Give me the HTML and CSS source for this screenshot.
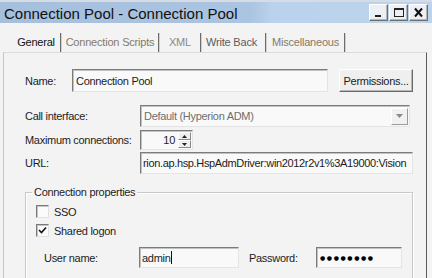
FILE: index.html
```html
<!DOCTYPE html>
<html lang="en">
<head>
    <meta charset="UTF-8">
    <title>Connection Pool - Connection Pool</title>
    <link rel="stylesheet" href="styles.css">
</head>
<body>
    <div class="window">
        <div class="titlebar">
            <span class="title">Connection Pool - Connection Pool</span>
            <div class="controls">
                <span class="ctl">
                    <svg width="13" height="11" viewBox="0 0 13 11"><rect x="3" y="8" width="6" height="2" fill="#222"/></svg>
                </span>
                <span class="ctl">
                    <svg width="13" height="11" viewBox="0 0 13 11"><rect x="2.5" y="1.5" width="9" height="8" fill="none" stroke="#222" stroke-width="1"/><rect x="2" y="1" width="10" height="2" fill="#222"/></svg>
                </span>
                <span class="ctl">
                    <svg width="13" height="11" viewBox="0 0 13 11"><path d="M3 1.5 L10 9.5 M10 1.5 L3 9.5" stroke="#111" stroke-width="2"/></svg>
                </span>
            </div>
        </div>

        <div class="tabs">
            <span class="tab tab-active tab-general">General</span>
            <span class="tab tab-scripts">Connection Scripts</span>
            <span class="tab tab-xml">XML</span>
            <span class="tab tab-writeback">Write Back</span>
            <span class="tab tab-misc">Miscellaneous</span>
        </div>

        <div class="panel">
            <div class="row row-name">
                <span class="lbl lbl-name">Name:</span>
                <div class="field field-name">Connection Pool</div>
                <div class="btn">Permissions...</div>
            </div>

            <div class="row row-call">
                <span class="lbl">Call interface:</span>
                <div class="field field-select">
                    <span class="select-text">Default (Hyperion ADM)</span>
                    <span class="select-arrow">
                        <svg width="7" height="4" viewBox="0 0 7 4"><path d="M0 0 H7 L3.5 4 Z" fill="#8a8a8a"/></svg>
                    </span>
                </div>
            </div>

            <div class="row row-max">
                <span class="lbl">Maximum connections:</span>
                <div class="field field-spin">
                    <span class="spin-value">10</span>
                    <span class="spin-btns">
                        <span class="spin-btn"><svg width="5" height="3" viewBox="0 0 5 3"><path d="M0 3 H5 L2.5 0 Z" fill="#222"/></svg></span>
                        <span class="spin-btn"><svg width="5" height="3" viewBox="0 0 5 3"><path d="M0 0 H5 L2.5 3 Z" fill="#222"/></svg></span>
                    </span>
                </div>
            </div>

            <div class="row row-url">
                <span class="lbl">URL:</span>
                <div class="field field-url">rion.ap.hsp.HspAdmDriver:win2012r2v1%3A19000:Vision</div>
            </div>

            <fieldset class="group">
                <legend>Connection properties</legend>
                <div class="check-row check-sso">
                    <span class="checkbox"></span>
                    <span>SSO</span>
                </div>
                <div class="check-row check-shared">
                    <span class="checkbox">
                        <svg width="9" height="9" viewBox="0 0 9 9"><path d="M1 4 L3.5 6.5 L8 1.5" fill="none" stroke="#111" stroke-width="1.6"/></svg>
                    </span>
                    <span>Shared logon</span>
                </div>
                <div class="row row-login">
                    <span class="lbl lbl-user">User name:</span>
                    <div class="field field-user">admin<span class="caret"></span></div>
                    <span class="lbl lbl-pass">Password:</span>
                    <div class="field field-pass">●●●●●●●●</div>
                </div>
            </fieldset>
        </div>
    </div>
</body>
</html>
```

FILE: styles.css
```css
* {
    margin: 0;
    padding: 0;
    box-sizing: border-box;
}

body {
    width: 432px;
    height: 278px;
    overflow: hidden;
    background: #f3f3f3;
    font-family: "Liberation Sans", Arial, sans-serif;
    font-size: 11px;
    letter-spacing: -0.3px;
    color: #1c1c1c;
}

.window {
    height: 278px;
    display: flex;
    flex-direction: column;
}

/* title bar */
.titlebar {
    height: 23px;
    flex: none;
    border-top: 2px solid #d6dce4;
    background: linear-gradient(90deg, #a5bfdd 0%, #abc4e1 58%, #bad2eb 63%, #bcd3ec 100%);
    display: flex;
    align-items: center;
    justify-content: space-between;
    padding: 0 4px;
}

.title {
    font-size: 15px;
    letter-spacing: 0;
    color: #111;
    margin-top: 1px;
}

.controls {
    display: flex;
    gap: 1px;
}

.ctl {
    width: 19px;
    height: 17px;
    display: flex;
    align-items: center;
    justify-content: center;
    background: #eceff3;
    border: 1px solid;
    border-color: #ffffff #6f6f6f #6f6f6f #ffffff;
    box-shadow: inset -1px -1px 0 #b5b5b5;
}

/* tabs */
.tabs {
    height: 29px;
    flex: none;
    display: flex;
    align-items: flex-end;
    padding-left: 12px;
}

.tab {
    height: 19px;
    line-height: 19px;
    text-align: center;
    color: #857a66;
    letter-spacing: -0.2px;
    border-right: 1px solid #6d6d6d;
    box-shadow: 1px 0 0 #d0d0d0;
    margin-right: 1px;
}

.tab-active { color: #111; }
.tab-general { width: 49px; }
.tab-scripts { width: 97px; }
.tab-xml { width: 41px; color: #8a8a8a; }
.tab-writeback { width: 64px; color: #5c5c5c; padding-right: 4px; }
.tab-misc { width: 78px; }

/* page */
.panel {
    flex: 1;
    margin-left: 3px;
    width: 424px;
    border-top: 1px solid #dcdcdc;
    border-left: 1px solid #c6c6c6;
    border-right: 1px solid #5a5a5a;
    padding-left: 21px;
    padding-top: 16px;
    overflow: hidden;
}

.row {
    display: flex;
    align-items: center;
}

.lbl {
    width: 115px;
    flex: none;
}

.lbl-name { width: 47px; }

.field {
    height: 22px;
    background: #f9f9f9;
    border: 1px solid;
    border-color: #7c7c7c #e4e4e4 #e4e4e4 #7c7c7c;
    box-shadow: inset 1px 1px 0 #c2c2c2;
    display: flex;
    align-items: center;
    padding-left: 3px;
    white-space: nowrap;
    overflow: hidden;
}

.field-name {
    width: 256px;
    height: 23px;
}

.btn {
    margin-left: 11px;
    width: 74px;
    height: 23px;
    display: flex;
    align-items: center;
    justify-content: center;
    background: #efefef;
    border: 1px solid;
    border-color: #ffffff #6a6a6a #6a6a6a #ffffff;
    box-shadow: inset -1px -1px 0 #b8b8b8;
}

.row-call { margin-top: 13px; }

.field-select {
    width: 270px;
    justify-content: space-between;
    color: #6e6e6e;
    padding-right: 1px;
}

.select-arrow {
    width: 17px;
    height: 17px;
    display: flex;
    align-items: center;
    justify-content: center;
    background: #f1f1f1;
    border: 1px solid;
    border-color: #ffffff #9a9a9a #9a9a9a #ffffff;
}

.row-max { margin-top: 3px; }

.field-spin {
    width: 53px;
    height: 20px;
    justify-content: flex-end;
    padding-right: 1px;
}

.spin-value { margin-right: 3px; }

.spin-btns {
    display: flex;
    flex-direction: column;
    width: 13px;
    height: 16px;
}

.spin-btn {
    flex: 1;
    display: flex;
    align-items: center;
    justify-content: center;
    background: #eeeeee;
    border: 1px solid;
    border-color: #ffffff #8a8a8a #8a8a8a #ffffff;
}

.row-url { margin-top: 2px; }

.field-url {
    width: 273px;
    padding-left: 2px;
    letter-spacing: -0.35px;
}

/* group box */
.group {
    margin-top: 12px;
    width: 386px;
    height: 120px;
    border: 1px solid #c9c9c9;
    box-shadow: inset 1px 1px 0 #ffffff, 1px 1px 0 #ffffff;
    padding: 0 10px;
}

.group legend {
    padding: 0 2px;
    margin-left: -4px;
    line-height: 13px;
}

.check-row {
    display: flex;
    align-items: center;
    gap: 5px;
    height: 13px;
}

.check-sso { margin-top: 6px; }
.check-shared { margin-top: 6px; }

.checkbox {
    width: 13px;
    height: 13px;
    display: flex;
    align-items: center;
    justify-content: center;
    background: #fbfbfb;
    border: 1px solid;
    border-color: #7a7a7a #e2e2e2 #e2e2e2 #7a7a7a;
    box-shadow: inset 1px 1px 0 #c4c4c4;
}

.row-login {
    margin-top: 10px;
    padding-left: 8px;
}

.lbl-user { width: 95px; }

.field-user {
    width: 100px;
    height: 21px;
    padding-left: 2px;
}

.caret {
    width: 1px;
    height: 13px;
    background: #111;
    margin-left: 1px;
}

.lbl-pass {
    width: 67px;
    margin-left: 10px;
}

.field-pass {
    width: 86px;
    height: 21px;
    font-family: "DejaVu Sans", sans-serif;
    font-size: 6px;
    letter-spacing: 1.6px;
    color: #000;
}
```
